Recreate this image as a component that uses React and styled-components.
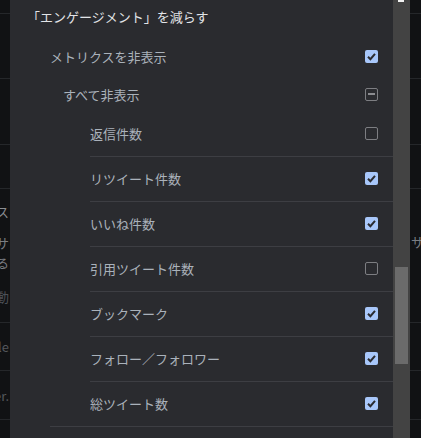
import React from 'react';
import styled, { createGlobalStyle } from 'styled-components';

const GlobalStyle = createGlobalStyle`
  html, body {
    margin: 0;
    padding: 0;
    background: #111214;
  }
  body {
    font-family: "Noto Sans CJK JP", "Noto Sans", sans-serif;
  }
`;

const Screen = styled.div`
  display: flex;
  width: 421px;
  height: 438px;
  overflow: hidden;
  background: #111214;
`;

// the page behind the popup, only a sliver of it shows on each side
const Strip = styled.div`
  display: flex;
  flex-direction: column;
  flex: 0 0 ${(p) => p.width}px;
  overflow: hidden;
`;

const StripCell = styled.div`
  display: flex;
  flex-direction: column;
  justify-content: ${(p) => (p.top ? 'flex-start' : 'center')};
  align-items: ${(p) => (p.side === 'left' ? 'flex-end' : 'flex-start')};
  flex: 0 0 ${(p) => p.h}px;
  box-sizing: border-box;
  border-bottom: 1px solid #25272a;
  padding-top: ${(p) => p.top || 0}px;
  padding-left: ${(p) => (p.side === 'left' ? 0 : 1)}px;
  padding-right: ${(p) => (p.side === 'left' ? 1 : 0)}px;
  white-space: nowrap;
`;

const FaintText = styled.span`
  font-size: 13px;
  line-height: 17px;
  margin-top: ${(p) => p.offset || 0}px;
  color: ${(p) => p.color || '#6c6f74'};
`;

const Panel = styled.div`
  flex: 0 0 383px;
  background: #2a2b2f;
  display: flex;
  flex-direction: column;
`;

const Title = styled.div`
  height: 36px;
  padding-left: 17px;
  line-height: 34px;
  font-size: 13px;
  color: #e2e4e7;
  box-sizing: border-box;
`;

const Group = styled.div`
  &::after {
    content: '';
    display: block;
    margin-left: 40px;
    border-bottom: 1px solid #3d3e43;
  }
`;

const Row = styled.div`
  display: flex;
  align-items: center;
  height: ${(p) => p.h}px;
  padding-left: ${(p) => p.indent}px;
  padding-right: 15px;
  box-sizing: border-box;
`;

const ItemList = styled.div`
  display: flex;
  flex-direction: column;
  margin-left: 80px;
`;

const Item = styled.div`
  display: flex;
  align-items: center;
  height: 45px;
  padding-right: 15px;
  padding-bottom: 2px;
  box-sizing: border-box;
  border-bottom: 1px solid #3d3e43;
  &:last-child {
    border-bottom: none;
    height: 44px;
  }
`;

const Label = styled.span`
  flex: 1;
  font-size: 13px;
  color: #aab2bb;
  white-space: nowrap;
`;

const Box = styled.span`
  display: inline-flex;
  align-items: center;
  justify-content: center;
  width: 13px;
  height: 13px;
  box-sizing: border-box;
  border-radius: 2px;
  background: ${(p) => (p.state === 'checked' ? '#a8c7fa' : 'transparent')};
  border: ${(p) => (p.state === 'checked' ? 'none' : '1px solid #7d7e82')};
`;

const Dash = styled.span`
  width: 7px;
  height: 2px;
  background: #8b8c90;
`;

const Scrollbar = styled.div`
  flex: 0 0 17px;
  background: #434343;
  display: flex;
  flex-direction: column;
  align-items: center;
`;

const ArrowMark = styled.span`
  width: 6px;
  height: 2px;
  background: #f2f2f2;
  margin-left: -2px;
`;

const Thumb = styled.span`
  width: 13px;
  height: 97px;
  margin-top: 265px;
  background: #6b6b6b;
`;

function Checkbox({ state }) {
  return (
    <Box state={state}>
      {state === 'checked' && (
        <svg width="13" height="13" viewBox="0 0 13 13">
          <path d="M3 6.8 L5.4 9.2 L10 3.8" fill="none" stroke="#2b2c30" strokeWidth="2" />
        </svg>
      )}
      {state === 'mixed' && <Dash />}
    </Box>
  );
}

const metrics = [
  { label: '返信件数', state: 'unchecked' },
  { label: 'リツイート件数', state: 'checked' },
  { label: 'いいね件数', state: 'checked' },
  { label: '引用ツイート件数', state: 'unchecked' },
  { label: 'ブックマーク', state: 'checked' },
  { label: 'フォロー／フォロワー', state: 'checked' },
  { label: '総ツイート数', state: 'checked' },
];

function BackdropStrip({ side, width }) {
  const left = side === 'left';
  return (
    <Strip width={width}>
      <StripCell side={side} h={14} />
      <StripCell side={side} h={65} />
      <StripCell side={side} h={66} />
      <StripCell side={side} h={44} />
      <StripCell side={side} h={134} top={14}>
        {left ? (
          <>
            <FaintText color="#8a8d92">設定項目のステータス</FaintText>
            <FaintText color="#7a7d82" offset={14}>表示を切り替えるとサ</FaintText>
            <FaintText color="#7a7d82" offset={3}>設定が反映される</FaintText>
            <FaintText color="#4c5057" offset={17}>自動</FaintText>
          </>
        ) : (
          <FaintText color="#7a7d82" offset={30}>サ</FaintText>
        )}
      </StripCell>
      <StripCell side={side} h={48}>
        {left && <FaintText color="#55585d">profile</FaintText>}
      </StripCell>
      <StripCell side={side} h={49}>
        {left && <FaintText color="#55585d">twitter.</FaintText>}
      </StripCell>
      <StripCell side={side} h={40} />
    </Strip>
  );
}

export default function App() {
  return (
    <>
      <GlobalStyle />
      <Screen>
        <BackdropStrip side="left" width={10} />
        <Panel>
          <Title>「エンゲージメント」を減らす</Title>
          <Group>
            <Row h={40} indent={40}>
              <Label>メトリクスを非表示</Label>
              <Checkbox state="checked" />
            </Row>
            <Row h={36} indent={53}>
              <Label>すべて非表示</Label>
              <Checkbox state="mixed" />
            </Row>
            <ItemList>
              {metrics.map((m) => (
                <Item key={m.label}>
                  <Label>{m.label}</Label>
                  <Checkbox state={m.state} />
                </Item>
              ))}
            </ItemList>
          </Group>
        </Panel>
        <Scrollbar>
          <ArrowMark />
          <Thumb />
        </Scrollbar>
        <BackdropStrip side="right" width={11} />
      </Screen>
    </>
  );
}
